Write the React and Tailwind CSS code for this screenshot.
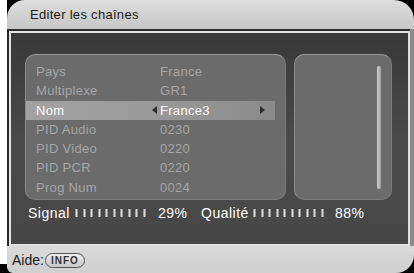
import React from "react";

const rows = [
  ["Pays", "France"],
  ["Multiplexe", "GR1"],
  ["Nom", "France3", true],
  ["PID Audio", "0230"],
  ["PID Video", "0220"],
  ["PID PCR", "0220"],
  ["Prog Num", "0024"],
];

function Ticks() {
  return (
    <div className="flex items-center gap-[4.5px]">
      {Array.from({ length: 10 }).map((_, i) => (
        <div key={i} className="w-[3px] h-[8px] rounded-[1px] bg-[#d6d6d6] border-x border-[#9a9a9a]" />
      ))}
    </div>
  );
}

export default function App() {
  return (
    <div className="w-[414px] h-[273px] bg-black flex overflow-hidden font-['Liberation_Sans',Arial,sans-serif]">
      <div className="w-[7px] h-[264px] bg-white shrink-0" />
      <div className="flex-1 flex flex-col">
        <div className="h-[29px] shrink-0 bg-gradient-to-b from-[#dedede] to-[#c6c6c6] rounded-tl-[18px] rounded-tr-[20px] pl-[23px] pt-[1px] flex items-center text-[13px] tracking-[0.3px] text-[#1a1a1a]">
          Editer les chaînes
        </div>
        <div className="h-[217px] shrink-0 flex flex-col bg-[#2a2a2a] pt-[2px] pl-[2px] border-r-[4px] border-r-[#8c8c8c]">
          <div className="flex-1 border-2 border-[#e2e2e2] bg-gradient-to-b from-[#383838] via-[#4a4a4a] to-[#474747] pt-[21px] pl-[14px]">
            <div className="flex gap-[8px] h-[146px]">
              <div className="w-[261px] rounded-[10px] bg-[#6b6b6b] border border-[#7a7a7a] border-t-[#979797] border-l-[#8c8c8c] pt-[7px] text-[13px] tracking-[0.3px]">
                {rows.map(([label, value, sel]) => (
                  <div
                    key={label}
                    className={
                      "h-[19.3px] flex items-center relative " +
                      (sel
                        ? "bg-gradient-to-r from-[#a2a2a2] via-[#9a9a9a] to-[#8a8a8a] mr-[10px] text-white"
                        : "text-[#a6a6a6]")
                    }
                  >
                    <span className="w-[134px] pl-[10px] shrink-0">{label}</span>
                    <span>{value}</span>
                    {sel && (
                      <>
                        <span className="absolute left-[126px] top-1/2 -translate-y-1/2 w-0 h-0 border-y-[4px] border-y-transparent border-r-[5px] border-r-[#2e2e2e]" />
                        <span className="absolute left-[234px] top-1/2 -translate-y-1/2 w-0 h-0 border-y-[4px] border-y-transparent border-l-[5px] border-l-[#2e2e2e]" />
                      </>
                    )}
                  </div>
                ))}
              </div>
              <div className="w-[98px] rounded-[10px] bg-[#6b6b6b] border border-[#7a7a7a] border-t-[#979797] border-l-[#8c8c8c] relative">
                <div className="absolute left-[82px] top-[11px] bottom-[10px] w-[4px] rounded-full bg-gradient-to-r from-[#d0d0d0] to-[#a0a0a0]" />
              </div>
            </div>
            <div className="h-[26px] flex items-center pl-[3px] text-[14px] tracking-[0.5px] text-white">
              <span className="w-[47px] shrink-0">Signal</span>
              <div className="w-[83px] shrink-0"><Ticks /></div>
              <span className="w-[43px] shrink-0">29%</span>
              <span className="w-[52px] shrink-0">Qualité</span>
              <div className="w-[82px] shrink-0"><Ticks /></div>
              <span>88%</span>
            </div>
          </div>
        </div>
        <div className="flex-1 bg-gradient-to-b from-[#dadada] to-[#cfcfcf] rounded-br-[18px] rounded-bl-[6px] flex items-center pl-[5px] pt-[2px]">
          <span className="text-[14px] text-[#1a1a1a]">Aide:</span>
          <span className="ml-[1px] h-[15px] px-[5px] flex items-center rounded-full border border-[#555] bg-gradient-to-b from-[#eeeeee] to-[#c8c8c8] text-[10px] font-bold tracking-[1px] text-[#333]">
            INFO
          </span>
        </div>
      </div>
    </div>
  );
}
